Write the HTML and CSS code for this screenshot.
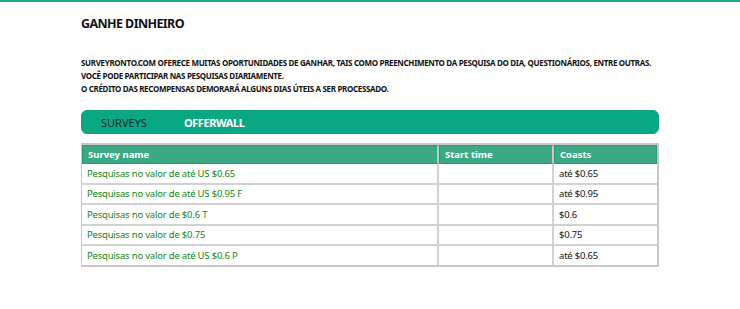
FILE: index.html
```html
<!DOCTYPE html>
<html lang="pt">
<head>
  <meta charset="UTF-8" />
  <title>Ganhe dinheiro</title>
  <link rel="stylesheet" href="styles.css">
</head>
<body>
  <div class="topline"></div>
  <main class="page">
    <h1>GANHE DINHEIRO</h1>
    <div class="intro">
      <p>SURVEYRONTO.COM OFERECE MUITAS OPORTUNIDADES DE GANHAR, TAIS COMO PREENCHIMENTO DA PESQUISA DO DIA, QUESTIONÁRIOS, ENTRE OUTRAS.</p>
      <p>VOCÊ PODE PARTICIPAR NAS PESQUISAS DIARIAMENTE.</p>
      <p>O CRÉDITO DAS RECOMPENSAS DEMORARÁ ALGUNS DIAS ÚTEIS A SER PROCESSADO.</p>
    </div>

    <nav class="tabs">
      <a class="tab active">SURVEYS</a>
      <a class="tab">OFFERWALL</a>
    </nav>

    <table class="surveys">
      <thead>
        <tr>
          <th class="col-name">Survey name</th>
          <th class="col-time">Start time</th>
          <th class="col-cost">Coasts</th>
        </tr>
      </thead>
      <tbody>
        <tr><td class="name">Pesquisas no valor de até US $0.65</td><td></td><td>até $0.65</td></tr>
        <tr><td class="name">Pesquisas no valor de até US $0.95 F</td><td></td><td>até $0.95</td></tr>
        <tr><td class="name">Pesquisas no valor de $0.6 T</td><td></td><td>$0.6</td></tr>
        <tr><td class="name">Pesquisas no valor de $0.75</td><td></td><td>$0.75</td></tr>
        <tr><td class="name">Pesquisas no valor de até US $0.6 P</td><td></td><td>até $0.65</td></tr>
      </tbody>
    </table>
  </main>
</body>
</html>
```

FILE: styles.css
```css
body {
  margin: 0;
  font-family: 'Noto Sans', sans-serif;
  background: #fff;
  color: #111;
}
.topline {
  height: 2px;
  background: #1aa886;
}
.page {
  width: 578px;
  margin: 0 0 0 81px;
}
h1 {
  margin: 13px 0 0;
  font-size: 12.5px;
  font-weight: bold;
  line-height: 18px;
  letter-spacing: -0.6px;
}
.intro {
  margin-top: 23px;
}
.intro p {
  margin: 0;
  font-size: 8px;
  font-weight: bold;
  line-height: 13px;
  letter-spacing: -0.33px;
  white-space: nowrap;
}
.tabs {
  margin-top: 15px;
  height: 22px;
  display: flex;
  align-items: center;
  gap: 37px;
  padding: 0 19px;
  background: #0aa882;
  border: 1px solid #13a07c;
  border-radius: 6px;
}
.tab {
  font-size: 11px;
  font-weight: bold;
  color: #fff;
  letter-spacing: -0.4px;
}
.tab.active {
  font-weight: normal;
  color: #1d2b25;
  letter-spacing: 0;
}
.surveys {
  margin-top: 9px;
  width: 100%;
  border-collapse: separate;
  border-spacing: 0;
  border: 1px solid #c8c8c8;
  border-width: 2px 2px 2px 1px;
  font-size: 9.5px;
}
.surveys th {
  background: #3ca985;
  color: #fff;
  text-align: left;
  font-weight: bold;
  height: 17px;
  padding: 0 5px;
  border: 1px solid #2b9a74;
  border-right: 2px solid #c8c8c8;
}
.surveys th:last-child {
  border-right: 1px solid #2b9a74;
}
.col-name { width: 344px; }
.col-time { width: 102px; }
.surveys td {
  height: 18.5px;
  padding: 0 5px;
  border-top: 2px solid #d2d2d2;
  border-right: 2px solid #d2d2d2;
  letter-spacing: -0.2px;
}
.surveys tbody tr:first-child td {
  border-top: none;
}
.surveys td:last-child {
  border-right: none;
}
.surveys td.name {
  color: #11880f;
}
```
